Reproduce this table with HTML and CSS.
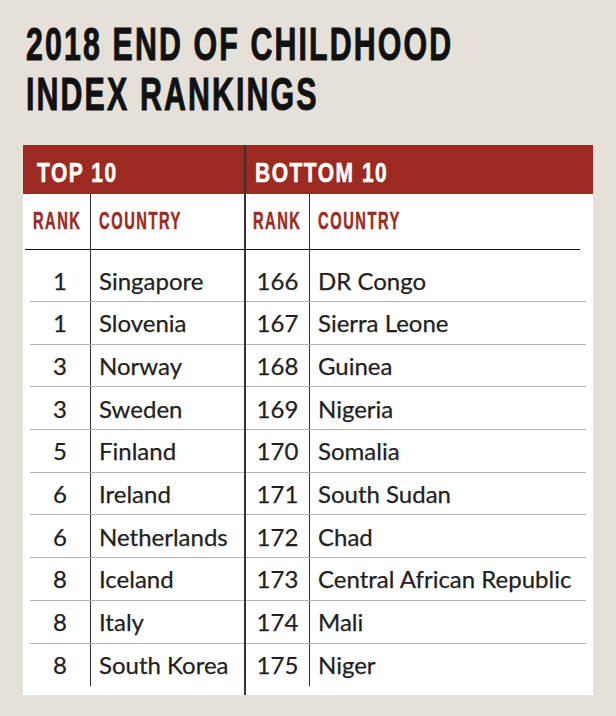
FILE: index.html
```html
<!DOCTYPE html>
<html lang="en">
<head>
<meta charset="utf-8">
<title>2018 End of Childhood Index Rankings</title>
<link rel="stylesheet" href="styles.css">
</head>
<body>
<main class="page">
  <h1 class="title"><span class="squeeze">2018 END OF CHILDHOOD</span><br><span class="squeeze">INDEX RANKINGS</span></h1>
  <section class="board">
    <div class="half half-top">
      <div class="band"><span class="band-text">TOP 10</span></div>
      <div class="row row-head">
        <div class="rank"><span class="head-text">RANK</span></div>
        <div class="country"><span class="head-text">COUNTRY</span></div>
      </div>
      <div class="row row-first"><div class="rank">1</div><div class="country">Singapore</div></div>
      <div class="row"><div class="rank">1</div><div class="country">Slovenia</div></div>
      <div class="row"><div class="rank">3</div><div class="country">Norway</div></div>
      <div class="row"><div class="rank">3</div><div class="country">Sweden</div></div>
      <div class="row"><div class="rank">5</div><div class="country">Finland</div></div>
      <div class="row"><div class="rank">6</div><div class="country">Ireland</div></div>
      <div class="row"><div class="rank">6</div><div class="country">Netherlands</div></div>
      <div class="row"><div class="rank">8</div><div class="country">Iceland</div></div>
      <div class="row"><div class="rank">8</div><div class="country">Italy</div></div>
      <div class="row row-last"><div class="rank">8</div><div class="country">South Korea</div></div>
    </div>
    <div class="half half-bottom">
      <div class="band"><span class="band-text">BOTTOM 10</span></div>
      <div class="row row-head">
        <div class="rank"><span class="head-text">RANK</span></div>
        <div class="country"><span class="head-text">COUNTRY</span></div>
      </div>
      <div class="row row-first"><div class="rank">166</div><div class="country">DR Congo</div></div>
      <div class="row"><div class="rank">167</div><div class="country">Sierra Leone</div></div>
      <div class="row"><div class="rank">168</div><div class="country">Guinea</div></div>
      <div class="row"><div class="rank">169</div><div class="country">Nigeria</div></div>
      <div class="row"><div class="rank">170</div><div class="country">Somalia</div></div>
      <div class="row"><div class="rank">171</div><div class="country">South Sudan</div></div>
      <div class="row"><div class="rank">172</div><div class="country">Chad</div></div>
      <div class="row"><div class="rank">173</div><div class="country">Central African Republic</div></div>
      <div class="row"><div class="rank">174</div><div class="country">Mali</div></div>
      <div class="row row-last"><div class="rank">175</div><div class="country">Niger</div></div>
    </div>
  </section>
</main>
</body>
</html>
```

FILE: styles.css
```css
* { box-sizing: border-box; }

html, body {
  margin: 0;
  padding: 0;
  background: #e5e1d8;
}

.page {
  width: 616px;
  height: 716px;
  padding: 0 0 0 23px;
  overflow: hidden;
}

.title {
  margin: 0;
  padding: 19px 0 0 3px;
  font-family: "Liberation Sans", "Arial", sans-serif;
  font-weight: 700;
  font-size: 46px;
  line-height: 50px;
  color: #111;
  white-space: nowrap;
}

.squeeze {
  display: inline-block;
  letter-spacing: 3.2px;
  transform: scaleX(0.66);
  transform-origin: left center;
  -webkit-text-stroke: 1px #111;
}

.board {
  margin-top: 26px;
  width: 570px;
  height: 550px;
  background: #fff;
  display: grid;
  grid-template-columns: 221px 349px;
}

.half {
  display: flex;
  flex-direction: column;
}

.half-bottom {
  border-left: 2px solid #333;
}

.band {
  height: 49px;
  overflow: hidden;
  background: #9d2a20;
  color: #fff;
  font-family: "Liberation Sans", "Arial", sans-serif;
  font-weight: 700;
  font-size: 28px;
  line-height: 55px;
  padding-left: 14px;
  white-space: nowrap;
}

.half-bottom .band { padding-left: 9px; }

.band-text {
  display: inline-block;
  letter-spacing: 2px;
  transform: scaleX(0.75);
  transform-origin: left center;
  -webkit-text-stroke: 0.6px #fff;
}

.row {
  display: flex;
  height: 42.7px;
  border-bottom: 1px solid #b3b3b3;
  font-family: "Lato", "Noto Sans", sans-serif;
  font-size: 24px;
  color: #231f20;
  -webkit-text-stroke: 0.25px #231f20;
  align-items: center;
  white-space: nowrap;
}

.half-top .row { margin-left: 7px; }
.half-bottom .row { margin-right: 7px; }

.rank {
  align-self: stretch;
  display: flex;
  align-items: center;
  justify-content: center;
  border-right: 1.5px solid #333;
}

.half-top .rank { width: 61px; }
.half-bottom .rank { width: 64px; }

.country { padding-left: 8px; }

.row-head {
  height: 56px;
  border-bottom: 1.5px solid #111;
  font-family: "Liberation Sans", "Arial", sans-serif;
  font-weight: 700;
  font-size: 23.7px;
  color: #9d2a20;
  -webkit-text-stroke: 0;
}

.head-text {
  display: inline-block;
  letter-spacing: 2.5px;
  transform: scaleX(0.62);
  transform-origin: center center;
  -webkit-text-stroke: 0.5px #9d2a20;
}

.row-head .country .head-text { transform-origin: left center; }

.half-top .row-head { margin-left: 2px; }
.half-top .row-head .rank { width: 66px; }
.half-bottom .row-head { margin-right: 13px; }

.row-first { height: 52px; padding-top: 9px; }
.row-first .rank { margin-top: -9px; padding-top: 9px; }

.row-last { border-bottom: none; }
```
